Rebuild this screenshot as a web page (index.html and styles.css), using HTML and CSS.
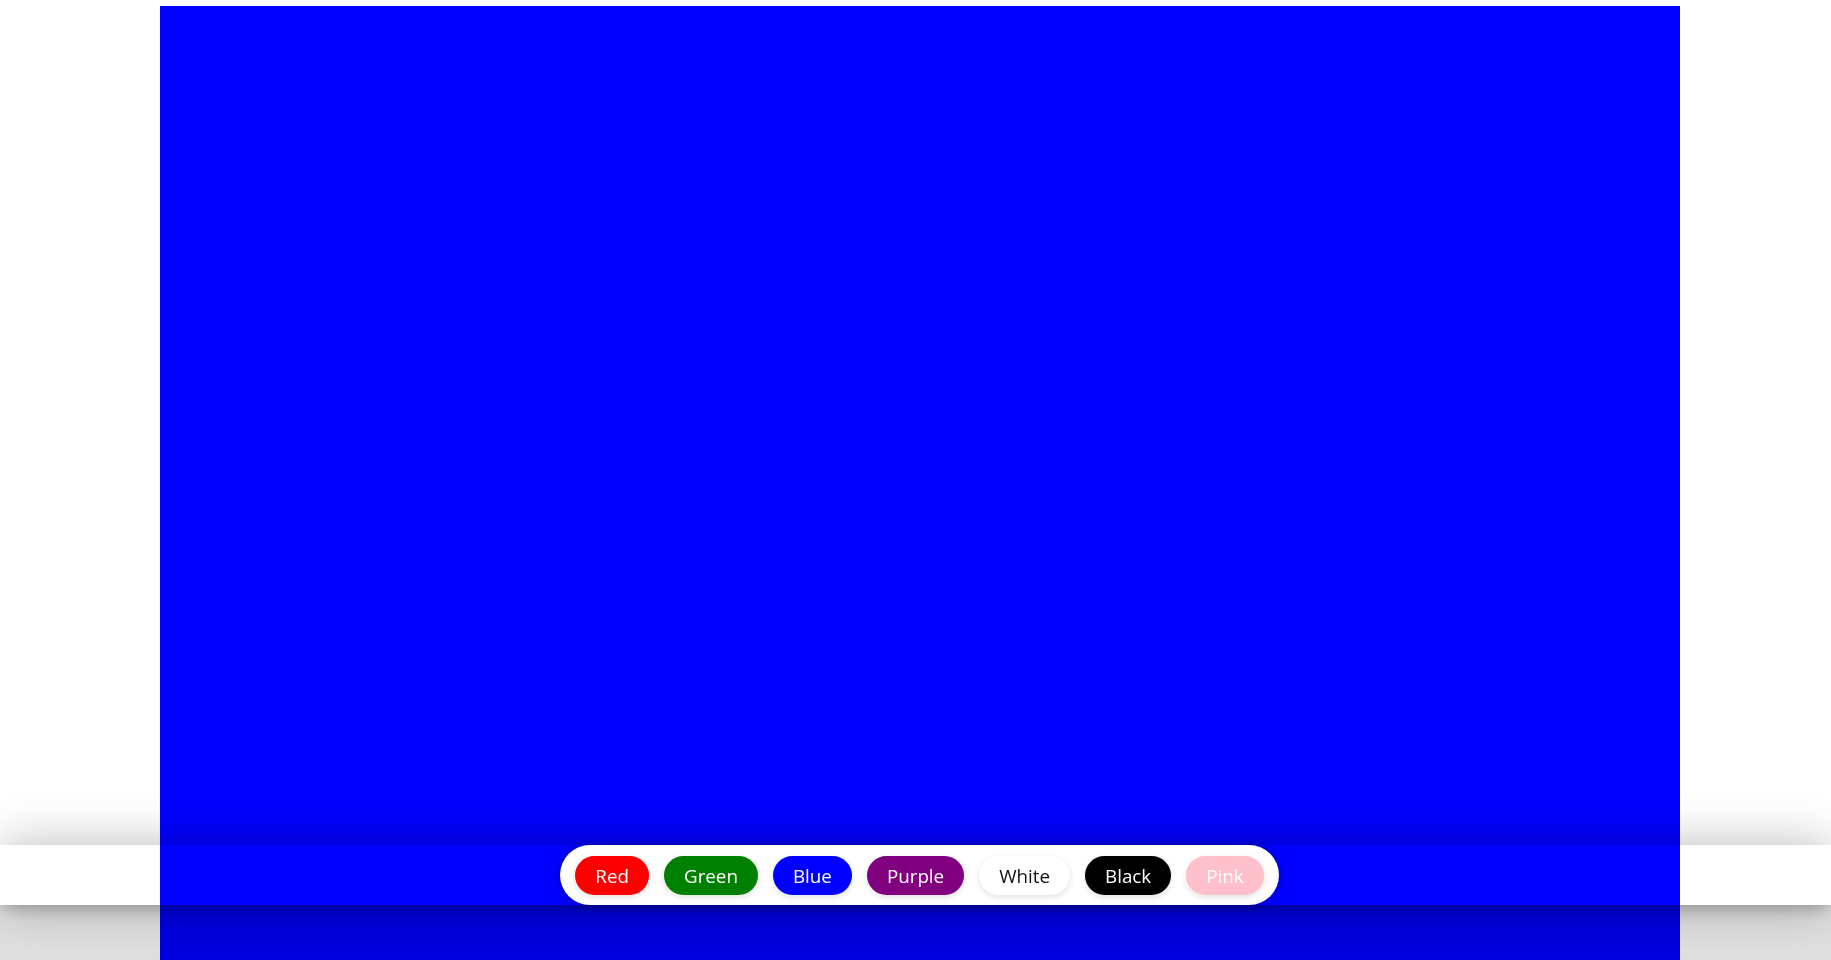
FILE: index.html
```html
<!DOCTYPE html>
<html lang="en">
<head>
<meta charset="utf-8">
<title>Colour picker</title>
<link rel="stylesheet" href="styles.css">
</head>
<body>
  <main class="stage">
    <div class="canvas"></div>
  </main>
  <div class="toolbar">
    <div class="swatches">
      <button class="swatch swatch-red">Red</button>
      <button class="swatch swatch-green">Green</button>
      <button class="swatch swatch-blue">Blue</button>
      <button class="swatch swatch-purple">Purple</button>
      <button class="swatch swatch-white">White</button>
      <button class="swatch swatch-black">Black</button>
      <button class="swatch swatch-pink">Pink</button>
    </div>
  </div>
</body>
</html>
```

FILE: styles.css
```css
html, body {
  margin: 0;
  padding: 0;
  height: 100%;
  overflow: hidden;
  background: #ffffff;
  font-family: "Open Sans", "Noto Sans", sans-serif;
}

.stage {
  padding: 6px 0 0 160px;
}

.canvas {
  width: 1520px;
  height: 954px;
  background: #0000ff;
}

.toolbar {
  position: fixed;
  left: 0;
  right: 0;
  bottom: 55px;
  height: 60px;
  display: flex;
  justify-content: center;
  padding-left: 8px;
  box-sizing: border-box;
  box-shadow:
    0 0 50px rgba(0, 0, 0, 0.28),
    0 8px 14px -4px rgba(0, 0, 0, 0.22),
    0 60px 0 rgba(0, 0, 0, 0.13);
}

.swatches {
  display: flex;
  align-items: center;
  gap: 15px;
  padding: 0 15px;
  height: 60px;
  box-sizing: border-box;
  background: #ffffff;
  border-radius: 30px;
  box-shadow: 0 0 10px rgba(0, 0, 0, 0.3);
}

.swatch {
  height: 39px;
  padding: 1px 20px 0;
  border: none;
  border-radius: 20px;
  font-family: "Open Sans", "Noto Sans", sans-serif;
  font-size: 18.8px;
  color: #ffffff;
  cursor: pointer;
  box-shadow: 0 2px 6px rgba(0, 0, 0, 0.12);
}

.swatch-red { background: #ff0000; }
.swatch-green { background: #008000; }
.swatch-blue { background: #0000ff; }
.swatch-purple { background: #800080; }
.swatch-white { background: #ffffff; color: #111111; }
.swatch-black { background: #000000; }
.swatch-pink { background: #ffc0cb; }
```
